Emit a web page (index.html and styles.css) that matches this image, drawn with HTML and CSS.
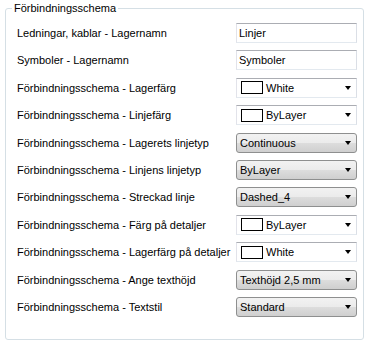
FILE: index.html
```html
<!DOCTYPE html>
<html>
    <head>
        <title>Förbindningsschema</title>
        <link rel="stylesheet" href="styles.css">
    </head>
    <body>
        <fieldset class="groupBox">
            <legend>Förbindningsschema</legend>
            <div class="settingsGrid">
                <div class="label">Ledningar, kablar - Lagernamn</div>
                <div class="textBox">Linjer</div>

                <div class="label">Symboler - Lagernamn</div>
                <div class="textBox">Symboler</div>

                <div class="label">Förbindningsschema - Lagerfärg</div>
                <div class="combo colorCombo"><span class="swatch"></span>White<span class="arrow"></span></div>

                <div class="label">Förbindningsschema - Linjefärg</div>
                <div class="combo colorCombo"><span class="swatch"></span>ByLayer<span class="arrow"></span></div>

                <div class="label">Förbindningsschema - Lagerets linjetyp</div>
                <div class="combo listCombo">Continuous<span class="arrow"></span></div>

                <div class="label">Förbindningsschema - Linjens linjetyp</div>
                <div class="combo listCombo">ByLayer<span class="arrow"></span></div>

                <div class="label">Förbindningsschema - Streckad linje</div>
                <div class="combo listCombo">Dashed_4<span class="arrow"></span></div>

                <div class="label">Förbindningsschema - Färg på detaljer</div>
                <div class="combo colorCombo"><span class="swatch"></span>ByLayer<span class="arrow"></span></div>

                <div class="label">Förbindningsschema - Lagerfärg på detaljer</div>
                <div class="combo colorCombo"><span class="swatch"></span>White<span class="arrow"></span></div>

                <div class="label">Förbindningsschema - Ange texthöjd</div>
                <div class="combo listCombo">Texthöjd 2,5 mm<span class="arrow"></span></div>

                <div class="label">Förbindningsschema - Textstil</div>
                <div class="combo listCombo">Standard<span class="arrow"></span></div>
            </div>
        </fieldset>
    </body>
</html>
```

FILE: styles.css
```css
body {
    margin: 0;
    padding-top: 1px;
    background-color: white;
    color: black;
    font-family: "Liberation Sans", Arial, sans-serif;
    font-size: 11px;
}
.groupBox {
    margin: 0 4px 0 5px;
    padding: 0 6px 22px 11px;
    border: 1px solid #d5dfe5;
    border-radius: 3px;
}
.groupBox legend {
    margin-left: -5px;
    padding: 0 2px;
    line-height: 14px;
}
.settingsGrid {
    display: grid;
    grid-template-columns: 1fr 121px;
    grid-auto-rows: 20px;
    row-gap: 7.4px;
    align-items: center;
    padding-top: 8px;
}
.label {
    white-space: nowrap;
}
.textBox {
    height: 20px;
    box-sizing: border-box;
    padding-left: 2px;
    line-height: 18px;
    border: 1px solid;
    border-color: #abadb3 #dbdfe6 #e3e9ef #e2e3ea;
    background-color: white;
}
.combo {
    position: relative;
    display: flex;
    align-items: center;
    height: 20px;
    box-sizing: border-box;
}
.colorCombo {
    padding-left: 4px;
    border: 1px solid;
    border-color: #abadb3 #dbdfe6 #e3e9ef #e2e3ea;
    background-color: white;
}
.listCombo {
    padding-left: 3px;
    border: 1px solid #8e8f8f;
    border-radius: 3px;
    background: linear-gradient(#f2f2f2 0%, #ebebeb 50%, #dddddd 50%, #cfcfcf 100%);
}
.swatch {
    width: 20px;
    height: 11px;
    margin-right: 3px;
    border: 1px solid black;
    background-color: white;
}
.arrow {
    position: absolute;
    right: 5px;
    top: 7px;
    width: 0;
    height: 0;
    border-left: 3.5px solid transparent;
    border-right: 3.5px solid transparent;
    border-top: 4px solid black;
}
```
